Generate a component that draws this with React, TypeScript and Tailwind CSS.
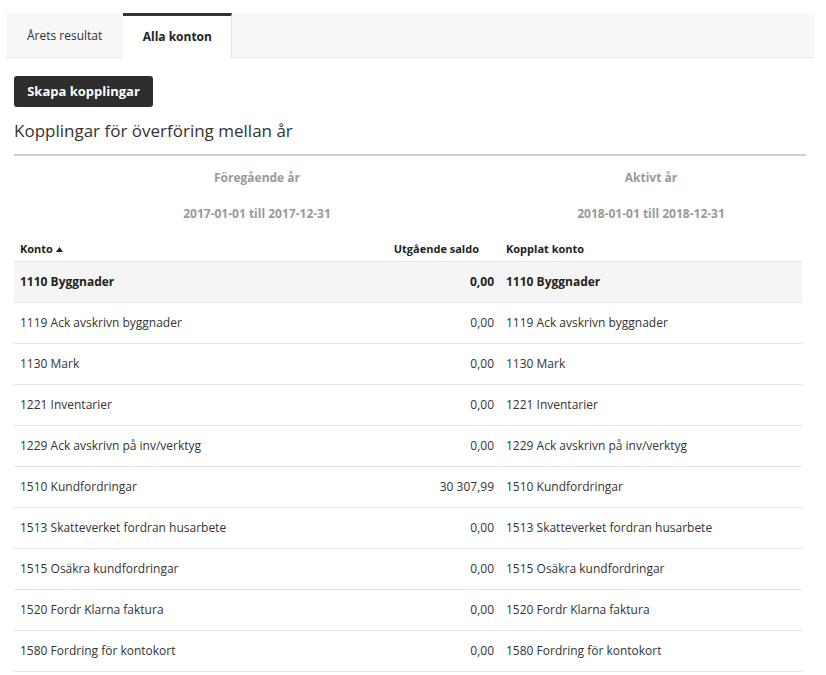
import { Fragment } from 'react'

interface Row {
  konto: string
  saldo: string
  kopplat: string
}

const rows: Row[] = [
  { konto: '1110 Byggnader', saldo: '0,00', kopplat: '1110 Byggnader' },
  { konto: '1119 Ack avskrivn byggnader', saldo: '0,00', kopplat: '1119 Ack avskrivn byggnader' },
  { konto: '1130 Mark', saldo: '0,00', kopplat: '1130 Mark' },
  { konto: '1221 Inventarier', saldo: '0,00', kopplat: '1221 Inventarier' },
  { konto: '1229 Ack avskrivn på inv/verktyg', saldo: '0,00', kopplat: '1229 Ack avskrivn på inv/verktyg' },
  { konto: '1510 Kundfordringar', saldo: '30 307,99', kopplat: '1510 Kundfordringar' },
  { konto: '1513 Skatteverket fordran husarbete', saldo: '0,00', kopplat: '1513 Skatteverket fordran husarbete' },
  { konto: '1515 Osäkra kundfordringar', saldo: '0,00', kopplat: '1515 Osäkra kundfordringar' },
  { konto: '1520 Fordr Klarna faktura', saldo: '0,00', kopplat: '1520 Fordr Klarna faktura' },
  { konto: '1580 Fordring för kontokort', saldo: '0,00', kopplat: '1580 Fordring för kontokort' },
]

export default function App() {
  return (
    <div className="min-h-[675px] bg-white pt-[13px] font-['Open_Sans',sans-serif] text-[#333]">
      {/* Tabs */}
      <div className="mx-[6px] mr-[12px] flex h-[45px] border-b border-[#e6e6e6] bg-[#f7f7f7]">
        <button className="px-[21px] pt-[1px] text-[12px] text-[#333]">Årets resultat</button>
        <button className="-mb-px w-[109px] border-t-[3px] border-r border-[#333] border-r-[#e6e6e6] bg-white text-[12px] font-bold text-[#222]">
          Alla konton
        </button>
      </div>

      <div className="mx-[14px] mr-[20px]">
        <button className="mt-[18px] h-[31px] w-[139px] rounded-[3px] bg-[#2d2d2d] text-[13px] font-bold text-white">
          Skapa kopplingar
        </button>
        <h2 className="mt-[7px] h-[34px] text-[17px] leading-[34px] text-[#333]">
          Kopplingar för överföring mellan år
        </h2>
        <div className="mt-[6px] h-[2px] bg-[#d0d0d0]" />

        {/* Period header */}
        <div className="mr-[4px] grid grid-cols-[486px_1fr] text-[12px] font-bold text-[#999]">
          <div className="pt-[13px] text-center leading-[17px]">Föregående år</div>
          <div className="pt-[13px] text-center leading-[17px]">Aktivt år</div>
          <div className="pt-[19px] text-center leading-[17px]">2017-01-01 till 2017-12-31</div>
          <div className="pt-[19px] text-center leading-[17px]">2018-01-01 till 2018-12-31</div>
        </div>

        {/* Table */}
        <div className="mr-[4px] mt-[15px] grid grid-cols-[1fr_106px_302px] text-[12px]">
          <div className="flex h-[24px] items-center gap-[3px] pl-[6px] text-[11px] font-bold text-[#222]">
            Konto
            <svg width="7" height="5" viewBox="0 0 7 5" className="mt-[1px]">
              <path d="M0 5 L3.5 0 L7 5 Z" fill="#222" />
            </svg>
          </div>
          <div className="flex h-[24px] items-center justify-end pr-[21px] text-[11px] font-bold whitespace-nowrap text-[#222]">
            Utgående saldo
          </div>
          <div className="flex h-[24px] items-center pl-[6px] text-[11px] font-bold text-[#222]">Kopplat konto</div>

          {rows.map((r, i) => {
            const bold = i === 0
            const cell = `flex h-[41px] items-center border-t border-[#e3e3e3] ${bold ? 'bg-[#f5f5f5] font-bold text-[#222]' : 'text-[#333]'}`
            return (
              <Fragment key={r.konto}>
                <div className={`${cell} pl-[6px]`}>{r.konto}</div>
                <div className={`${cell} justify-end pr-[6px]`}>{r.saldo}</div>
                <div className={`${cell} pl-[6px]`}>{r.kopplat}</div>
              </Fragment>
            )
          })}
          <div className="col-span-3 border-t border-[#e3e3e3]" />
        </div>
      </div>
    </div>
  )
}
